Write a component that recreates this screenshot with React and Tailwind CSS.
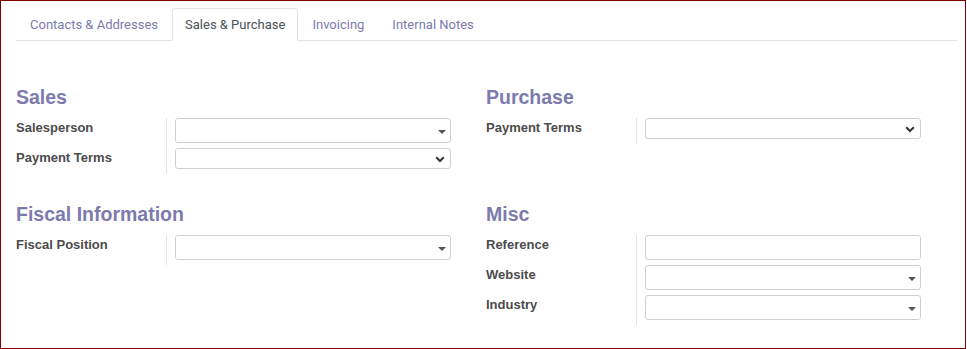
import React from 'react'

const tabs = ['Contacts & Addresses', 'Sales & Purchase', 'Invoicing', 'Internal Notes']

function Caret() {
  return (
    <svg className="absolute right-[4px] top-[11px]" width="8" height="4" viewBox="0 0 8 4">
      <path d="M0 0h8L4 4z" fill="#555" />
    </svg>
  )
}

function Chevron() {
  return (
    <svg className="absolute right-[5px] top-[7px]" width="10" height="7" viewBox="0 0 10 7">
      <path d="M1.2 1.3 5 5l3.8-3.7" fill="none" stroke="#333" strokeWidth="2" />
    </svg>
  )
}

function Field({ kind }) {
  if (kind === 'select') {
    return (
      <div className="relative h-[21px] w-[276px] rounded-[3px] border border-[#cfcfcf] bg-white">
        <Chevron />
      </div>
    )
  }
  return (
    <div className="relative h-[25px] w-[276px] rounded-[3px] border border-[#cfcfcf] bg-white">
      {kind === 'many2one' && <Caret />}
    </div>
  )
}

function Group({ title, rows }) {
  return (
    <div>
      <h2 className="mb-[6px] h-[30px] text-[19.5px] font-bold leading-[30px] text-[#7c7bad]">{title}</h2>
      <div className="flex flex-col">
        {rows.map(([label, kind]) => (
          <div key={label} className="flex">
            <div className="w-[151px] border-r border-[#e2e2e2] text-[13px] font-bold leading-[1.5] text-[#4c4c4c]">
              {label}
            </div>
            <div className="pb-[5px] pl-[8px]">
              <Field kind={kind} />
            </div>
          </div>
        ))}
      </div>
    </div>
  )
}

export default function App() {
  return (
    <div
      className="h-[349px] w-[966px] border border-[#800000] bg-white px-[15px] pt-[7px]"
      style={{ fontFamily: '"Liberation Sans", Arial, sans-serif' }}
    >
      <ul className="flex h-[33px] w-[941px] border-b border-[#dee2e6] font-['Roboto',sans-serif]">
        {tabs.map((t) => (
          <li
            key={t}
            className={
              t === 'Sales & Purchase'
                ? '-mb-px flex h-[33px] items-center rounded-t-[4px] border border-[#dee2e6] border-b-white bg-white px-[12px] text-[13px] text-[#495057]'
                : '-mb-px flex h-[33px] items-center border border-transparent px-[13px] text-[13px] text-[#7c7bad]'
            }
          >
            {t}
          </li>
        ))}
      </ul>
      <div className="mt-[41px] grid grid-cols-[470px_470px] gap-y-[25px]">
        <Group
          title="Sales"
          rows={[
            ['Salesperson', 'many2one'],
            ['Payment Terms', 'select'],
          ]}
        />
        <Group title="Purchase" rows={[['Payment Terms', 'select']]} />
        <Group title="Fiscal Information" rows={[['Fiscal Position', 'many2one']]} />
        <Group
          title="Misc"
          rows={[
            ['Reference', 'text'],
            ['Website', 'many2one'],
            ['Industry', 'many2one'],
          ]}
        />
      </div>
    </div>
  )
}
